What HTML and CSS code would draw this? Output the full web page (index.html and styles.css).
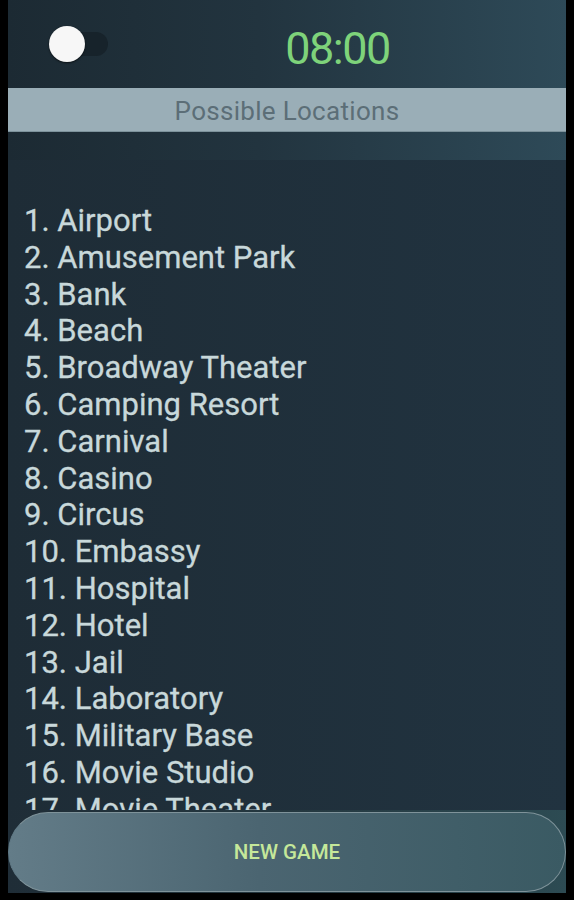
FILE: index.html
```html
<!DOCTYPE html>
<html>
<head>
<meta charset="utf-8">
<link rel="stylesheet" href="styles.css">
</head>
<body>
<div class="app">
  <div class="top">
    <div class="header">
      <div class="toggle"><span class="track"></span><span class="knob"></span></div>
      <div class="time">08:00</div>
    </div>
    <div class="banner">Possible Locations</div>
  </div>
  <div class="list">
    <div class="item">1. Airport</div>
    <div class="item">2. Amusement Park</div>
    <div class="item">3. Bank</div>
    <div class="item">4. Beach</div>
    <div class="item">5. Broadway Theater</div>
    <div class="item">6. Camping Resort</div>
    <div class="item">7. Carnival</div>
    <div class="item">8. Casino</div>
    <div class="item">9. Circus</div>
    <div class="item">10. Embassy</div>
    <div class="item">11. Hospital</div>
    <div class="item">12. Hotel</div>
    <div class="item">13. Jail</div>
    <div class="item">14. Laboratory</div>
    <div class="item">15. Military Base</div>
    <div class="item">16. Movie Studio</div>
    <div class="item">17. Movie Theater</div>
  </div>
  <div class="footer">
    <button class="newgame">NEW GAME</button>
  </div>
</div>
</body>
</html>
```
FILE: styles.css
```css
html, body {
  margin: 0;
  padding: 0;
  background: #000;
  height: 900px;
  overflow: hidden;
}
.app {
  margin: 0 8px;
  height: 893px;
  display: flex;
  flex-direction: column;
  font-family: Roboto, "Noto Sans", sans-serif;
}
.top {
  height: 160px;
  flex: none;
  background: linear-gradient(90deg, #1c2a33 0%, #22343f 45%, #2e4a58 100%);
}
.header {
  height: 88px;
  display: flex;
  align-items: center;
  padding-left: 41px;
}
.toggle {
  position: relative;
  width: 60px;
  height: 36px;
  flex: none;
}
.track {
  position: absolute;
  left: 4px;
  top: 6px;
  width: 55px;
  height: 24px;
  border-radius: 12px;
  background: #17232b;
}
.knob {
  position: absolute;
  left: 0;
  top: 0;
  width: 36px;
  height: 36px;
  border-radius: 50%;
  background: #f7f7f7;
  box-shadow: 0 1px 2px rgba(0,0,0,0.6);
}
.time {
  flex: 1;
  text-align: center;
  color: #7ed37a;
  font-size: 45px;
  letter-spacing: -1.5px;
  padding-top: 8px;
}
.banner {
  height: 44px;
  background: #9aaeb7;
  color: #5c6e77;
  font-size: 26px;
  letter-spacing: 0.3px;
  display: flex;
  align-items: center;
  justify-content: center;
  padding-top: 2px;
  box-sizing: border-box;
  border-bottom: 1px solid #7d929b;
}
.list {
  flex: 1;
  overflow: hidden;
  background: linear-gradient(90deg, #1e2c36 0%, #213340 100%);
  padding: 43px 16px 0;
  color: #c8d8da;
  font-size: 31px;
  line-height: 36.8px;
  -webkit-text-stroke: 0.3px #c8d8da;
}
.item {
  white-space: nowrap;
}
.footer {
  height: 83px;
  flex: none;
  background: linear-gradient(90deg, #1f2d37 0%, #24373f 50%, #2d4b53 100%);
  padding-top: 2px;
  box-sizing: border-box;
}
.newgame {
  display: block;
  width: 100%;
  height: 80px;
  border-radius: 40px;
  border: 1.5px solid #7f939a;
  border-left-color: #627b87;
  background: linear-gradient(90deg, #637c88 0%, #4b6571 45%, #3a5a63 100%);
  color: #c5e89a;
  font-family: Roboto, "Noto Sans", sans-serif;
  font-weight: 500;
  font-size: 20.5px;
  padding: 0;
}
```
